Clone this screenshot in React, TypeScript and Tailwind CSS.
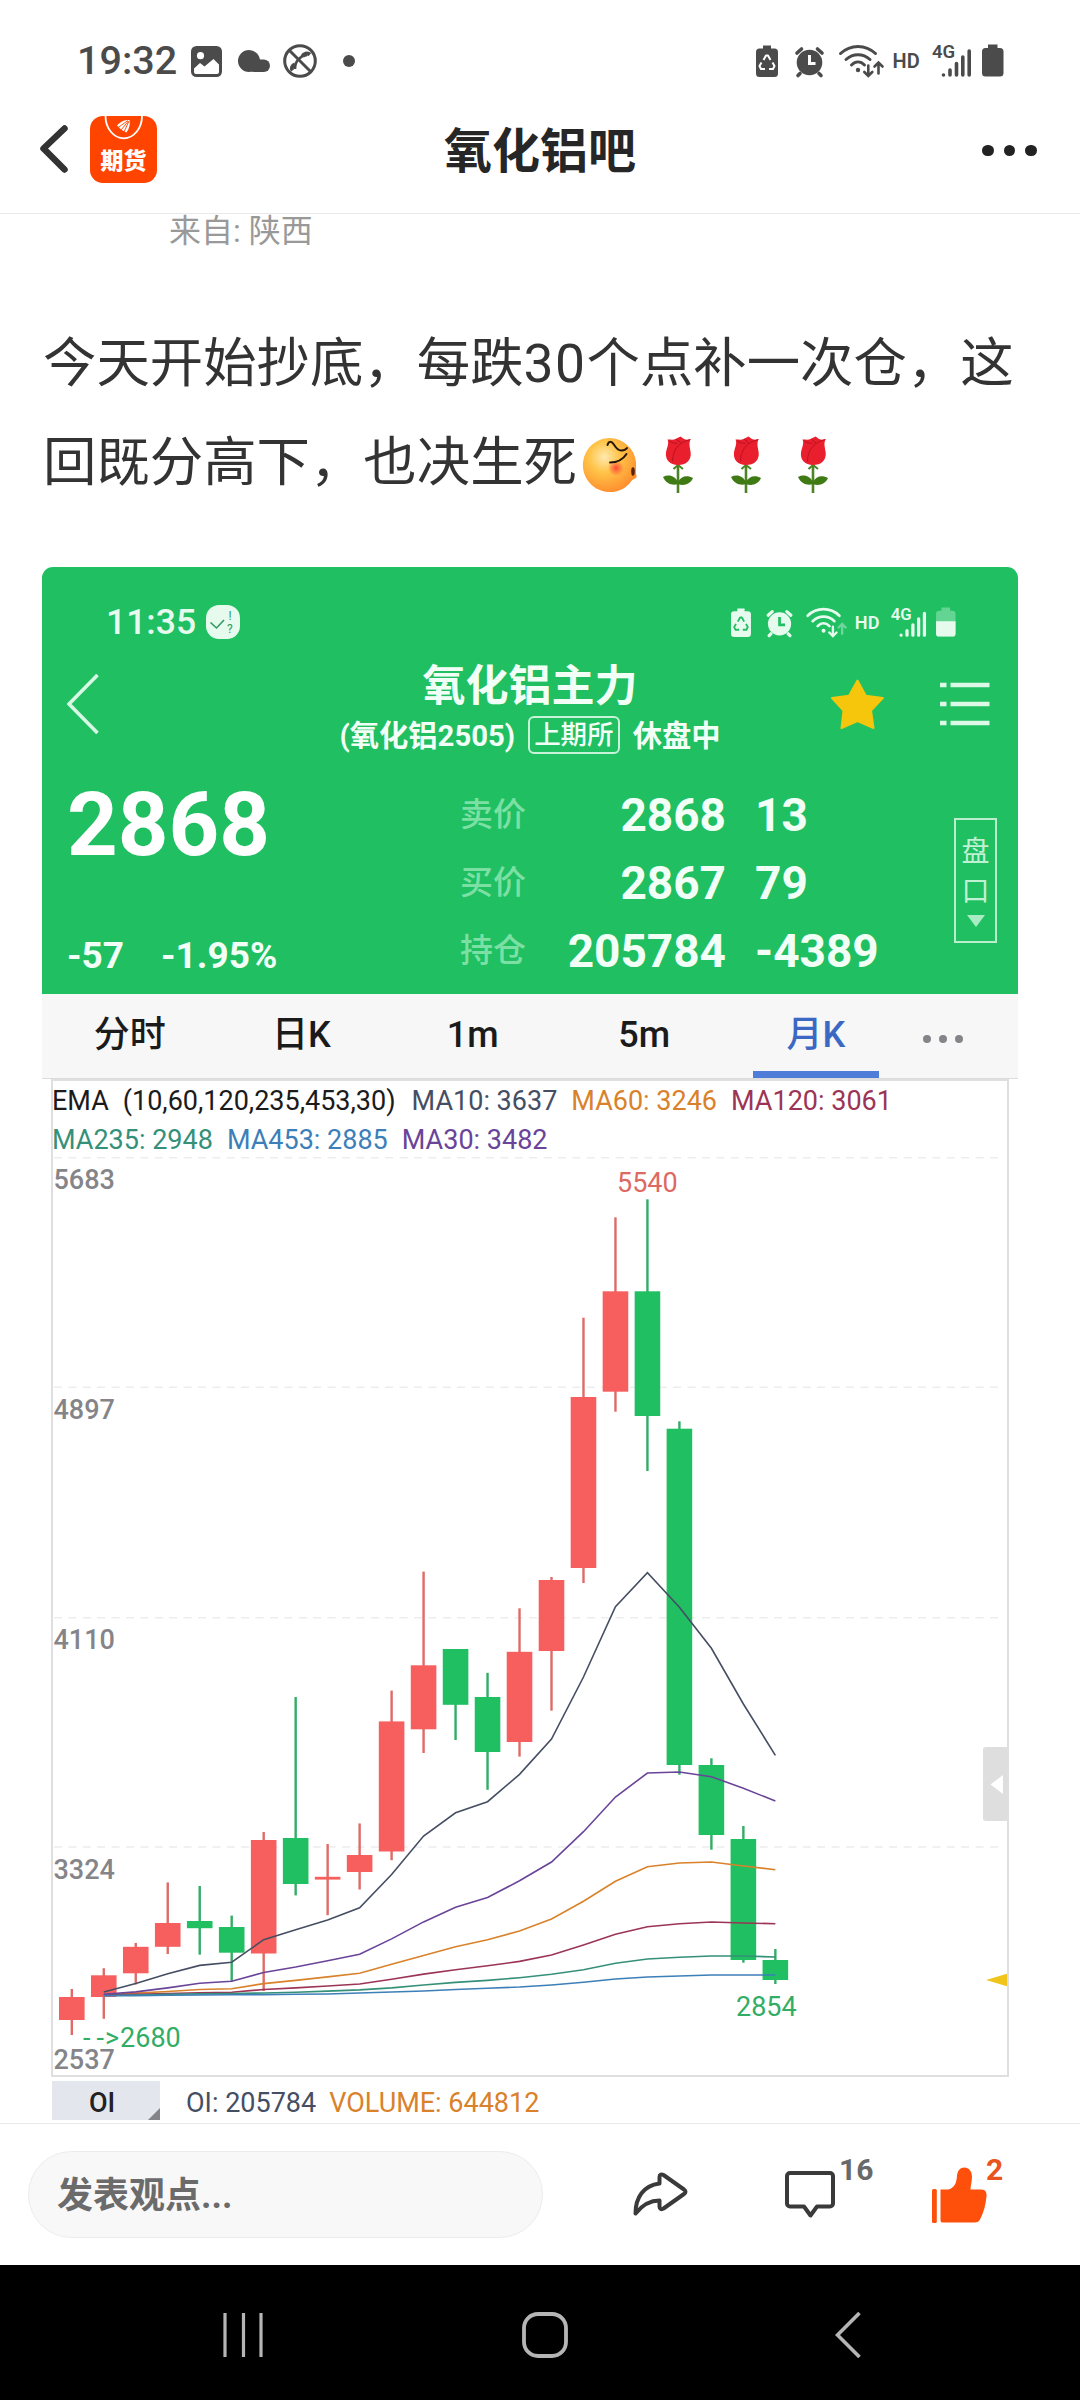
import type { ReactNode } from 'react';

const UP = '#f75f5f';
const DOWN = '#1fbf62';

const TABS = ['分时', '日K', '1m', '5m', '月K'];

const QUOTES = [
  { label: '卖价', value: '2868', extra: '13' },
  { label: '买价', value: '2867', extra: '79' },
  { label: '持仓', value: '205784', extra: '-4389' },
];

// [up, high, body top, body bottom, low]
const CANDLES: [boolean, number, number, number, number][] = [
  [true, 1989, 1997, 2020, 2035],
  [true, 1968.2, 1975.3, 1997, 2018.8],
  [true, 1942.9, 1946.8, 1973.3, 1984.4],
  [true, 1882.4, 1923, 1946.8, 1954],
  [false, 1886, 1921, 1928.2, 1954.7],
  [false, 1915.6, 1927, 1952.7, 1981.2],
  [true, 1832, 1840, 1953.5, 1991],
  [false, 1697, 1838, 1884, 1895.4],
  [true, 1844, 1876.8, 1879.6, 1915.2],
  [true, 1823.4, 1855, 1872, 1889.5],
  [true, 1690.6, 1721.4, 1851.5, 1860.2],
  [true, 1571.6, 1665.3, 1729.3, 1753],
  [false, 1649, 1649, 1704.8, 1740],
  [false, 1672.8, 1697, 1752, 1789.8],
  [true, 1608.3, 1651.8, 1742, 1756.6],
  [true, 1577, 1580, 1651, 1710.7],
  [true, 1317.7, 1397, 1568, 1583],
  [true, 1217.3, 1291.3, 1391.7, 1411.7],
  [false, 1199.3, 1291.3, 1416, 1471],
  [false, 1421.3, 1428.7, 1765, 1774.7],
  [false, 1758.3, 1765, 1835, 1849.7],
  [false, 1826, 1839, 1960, 1962.7],
  [false, 1949, 1960, 1980, 1984],
];

// Every average starts at the second candle
const AVERAGES = [
  {
    color: '#454e63',
    ys: [1991.9, 1983.6, 1973.7, 1965.4, 1962.2, 1939.7, 1929.8, 1919.9, 1907.7, 1874.5, 1836.1, 1812.8, 1801.7, 1774.4, 1739, 1677, 1606.7, 1572.7, 1607.3, 1648.3, 1704, 1755.3],
  },
  {
    color: '#d9822b',
    ys: [1994.7, 1993.1, 1991.5, 1989.5, 1988.7, 1983.6, 1980.4, 1976.9, 1973.3, 1964.2, 1955.5, 1946.8, 1939.7, 1931, 1919, 1901.3, 1881.3, 1866.7, 1863, 1862, 1866, 1869.7],
  },
  {
    color: '#9c3456',
    ys: [1995, 1994.3, 1993.5, 1992.7, 1992.3, 1989.5, 1987.9, 1986, 1984, 1979.2, 1974.1, 1969.8, 1965.8, 1961.4, 1955, 1945, 1934.3, 1926.7, 1923.7, 1922, 1923, 1923.7],
  },
  {
    color: '#35907a',
    ys: [1995.5, 1995, 1994.3, 1993.9, 1993.5, 1993, 1992.3, 1991.1, 1989.9, 1987.9, 1985, 1982.4, 1980.4, 1977.7, 1974.3, 1969.7, 1963.3, 1959, 1957.3, 1956, 1956, 1957],
  },
  {
    color: '#3d7fb8',
    ys: [1995.8, 1995.6, 1995.2, 1995, 1994.8, 1994.6, 1994.3, 1994, 1993, 1992, 1991, 1989.5, 1988.2, 1987, 1985, 1982.3, 1979, 1977, 1976, 1975, 1975, 1975],
  },
  {
    color: '#6a4499',
    ys: [1994.3, 1991.9, 1987.9, 1983.2, 1981.2, 1972.5, 1967, 1960.7, 1954.3, 1938.9, 1921.9, 1907.3, 1897.4, 1880.8, 1862, 1831.7, 1797, 1773, 1772, 1776.7, 1788.3, 1801],
  },
];

const GRID = [
  { y: 1157.7, label: '5683' },
  { y: 1387.3, label: '4897' },
  { y: 1617.7, label: '4110' },
  { y: 1847, label: '3324' },
];

const candleX = (i: number) => 71.8 + i * 31.98;

function StatusIcons({ className, cutout, dim }: { className: string; cutout: string; dim?: boolean }) {
  return (
    <svg viewBox="0 0 248 34" className={className} fill="currentColor" overflow="visible">
      {/* battery care */}
      <path d="M7 1.5h8v3h3.5a3.5 3.5 0 0 1 3.5 3.5v21.500a3.500 3.500 0 0 1-3.500 3.500h-15a3.500 3.500 0 0 1-3.500-3.500v-21.500a3.500 3.500 0 0 1 3.500-3.500h3.500z" />
      <g fill="none" stroke={cutout} strokeWidth="2" strokeLinejoin="round">
        <path d="M7.500 16l2.500-4.500h2l2.500 4.500M16.500 18.500l2 3.500-1.500 3h-4M9 25h-4l-1.500-3 2-3.500" />
      </g>
      {/* alarm */}
      <circle cx="53.500" cy="18.500" r="12.800" />
      <g stroke="currentColor" strokeWidth="3.600" strokeLinecap="round" fill="none">
        <path d="M41 9l4.500-4M66 9l-4.500-4M44 29.500l-2 2M63 29.500l2 2" />
      </g>
      <path d="M53.500 11v8.500h6" fill="none" stroke={cutout} strokeWidth="3" />
      {/* wifi */}
      <g fill="none" stroke="currentColor" strokeWidth="3" strokeLinecap="round">
        <path d="M84.500 9.500c10-9.500 25-9.500 35 0M90 15.500c7-6.500 17-6.500 24 0M95.500 21c4-4 9-4 13 0" />
      </g>
      <circle cx="102" cy="26" r="2.200" />
      <path d="M112.300 21.500v9.500M108.300 28l4 4 4-4" fill="none" stroke="currentColor" strokeWidth="2.600" strokeLinecap="round" />
      <path d="M122.500 29.500v-10M118.500 22.500l4-4 4 4" fill="none" stroke="currentColor" strokeWidth="2.600" strokeLinecap="round" opacity={dim ? 0.4 : 1} />
      <text x="136.500" y="24" fontSize="20" fontWeight="600">HD</text>
      <text x="176" y="14" fontSize="18.500" fontWeight="600">4G</text>
      {/* signal */}
      <g stroke="currentColor" strokeWidth="3.600" strokeLinecap="round">
        <path d="M187.500 31v0M194 26v5M200.500 19.500v11.500M206.800 13v18M213.200 7v24" />
      </g>
      {/* battery */}
      <g opacity={dim ? 0.35 : 1}>
        <path d="M232 .5h9.500v3.500h2.500a3.500 3.500 0 0 1 3.500 3.500v21.500a3.500 3.500 0 0 1-3.500 3.500h-14.500a3.500 3.500 0 0 1-3.500-3.500v-21.500a3.500 3.500 0 0 1 3.500-3.500h2.500z" />
      </g>
      {dim && <path d="M226 15.500h21.500v13.500a3.500 3.500 0 0 1-3.500 3.500h-14.500a3.500 3.500 0 0 1-3.500-3.500z" />}
    </svg>
  );
}

function StatusBar() {
  return (
    <div className="flex h-[88px] items-center pt-[34px] pl-[77px] text-[#4b4b4b]">
      <span className="w-[114px] text-[39.500px] leading-none font-medium">19:32</span>
      <svg viewBox="0 0 31 31" className="h-[31px] w-[31px]">
        <rect width="31" height="31" rx="5.500" fill="currentColor" />
        <circle cx="9.500" cy="9.700" r="3.600" fill="#fff" />
        <path d="M3 22.500l6-5.500 4.500 3.500 9-7.500 5.500 5.500v7.500a2 2 0 0 1-2 2h-21a2 2 0 0 1-2-2z" fill="#fff" />
      </svg>
      <svg viewBox="0 0 32 22" className="ml-4 h-[22px] w-8" fill="currentColor">
        <circle cx="11" cy="11" r="11" />
        <rect x="10" y="9.500" width="22" height="12.500" rx="6.200" />
      </svg>
      <svg viewBox="0 0 34 34" className="ml-[13px] h-[34px] w-[34px]" fill="none" stroke="currentColor">
        <circle cx="17" cy="17" r="15.300" strokeWidth="3" />
        <path d="M6 6l22 22" strokeWidth="3" />
        <path d="M12 25c0-8 5-13 12-14" strokeWidth="2.500" />
        <path d="M19.500 12.500c1-3 5-4 7.500-2M9.500 26.500c-1.500-2-.5-5 2.500-6" strokeWidth="4" />
      </svg>
      <span className="ml-[26px] size-3 rounded-full bg-[#4b4b4b]" />
      <StatusIcons className="ml-[401px] h-[34px] w-[248px]" cutout="#fff" />
    </div>
  );
}

function ForumIcon() {
  return (
    <svg viewBox="0 0 67 67" className="mb-[2px] ml-[22px] size-[67px]">
      <rect width="67" height="67" rx="13" fill="#ff4400" />
      <path d="M15.500 0a18 22 0 0 0 36.500 0" fill="none" stroke="#fff" strokeWidth="1.800" />
      <path d="M27 9.500c3-4 8-6 12.500-5.500 1 4-.5 9-3 12.500l-3-1.500-2.500-1.500-2-2z" fill="#fff" />
      <path d="M28 11.500l10-7M31 14l7.500-9M34 16l5-11" stroke="#ff4400" strokeWidth=".9" />
      <text x="33.500" y="53" textAnchor="middle" fontSize="23" fontWeight="900" fill="#fff">期货</text>
    </svg>
  );
}

function TitleBar() {
  return (
    <header className="flex h-[126px] items-center border-b border-[#e9e9e9] pl-10">
      <svg viewBox="0 0 28 48" className="mb-1 h-12 w-7" fill="none" stroke="#333" strokeWidth="6.500" strokeLinecap="round" strokeLinejoin="round">
        <path d="M24.500 3.500L3.500 23.500l21 21" />
      </svg>
      <ForumIcon />
      <h1 className="mt-[3px] ml-[287px] w-[196px] text-[48px] leading-none font-bold text-[#262626]">氧化铝吧</h1>
      <div className="ml-[342px] flex gap-[10px]">
        <span className="size-[11.500px] rounded-full bg-[#222]" />
        <span className="size-[11.500px] rounded-full bg-[#222]" />
        <span className="size-[11.500px] rounded-full bg-[#222]" />
      </div>
    </header>
  );
}

function KissFace() {
  return (
    <svg viewBox="0 0 56 56" className="size-14">
      <defs>
        <radialGradient id="skin" cx=".4" cy=".35" r=".7">
          <stop offset="0" stopColor="#ffe9b0" />
          <stop offset=".4" stopColor="#ffc54a" />
          <stop offset="1" stopColor="#ff8a2b" />
        </radialGradient>
        <radialGradient id="blush">
          <stop offset="0" stopColor="#ff4a35" />
          <stop offset="1" stopColor="#ff4a35" stopOpacity="0" />
        </radialGradient>
      </defs>
      <path d="M28 1a27 27 0 1 0 20 45c1-2 2-3 4-4 3-1 3-3 2-5v-12a27 27 0 0 0-26-24z" fill="url(#skin)" />
      <circle cx="34" cy="31" r="8" fill="url(#blush)" />
      <g fill="none" stroke="#26160a" strokeWidth="2" strokeLinecap="round">
        <path d="M25.500 8c1-4 4-4 6-1s4 7 8 6.500c2 0 4-.5 5.500-2.500" />
        <path d="M28 25.500c7 0 13-3 16.500-8.500" />
      </g>
      <ellipse cx="51" cy="34.500" rx="1.800" ry="4.200" fill="#5a2208" />
    </svg>
  );
}

function Rose() {
  return (
    <svg viewBox="0 0 56 58" className="h-[58px] w-14">
      <path d="M28 27v30" stroke="#4c8426" strokeWidth="2.600" />
      <path d="M28 48c-5 2-12 0-15-7 6-3 12-1 15 5 3-6 9-7 15-4-3 7-10 8-15 6z" fill="#3f7a14" />
      <path d="M23.500 33l4.500-4 5 4" fill="none" stroke="#4c8426" strokeWidth="2" />
      <path d="M17.500 3.500c4 0 6 .5 8-.5l5-2.500 3.500 2.500c2 1 4 .5 6.500.5-2 4-.5 8 .2 13 .8 8-4.700 12.500-12.700 12.500s-13-5-12-12.500c.7-5 3.500-9 1.500-13z" fill="#ea1f2d" />
      <path d="M40.500 3.500c-9 2-18 8-18 22M19 5c3 2 5 2 8.500 2.500M26 3l5 4" fill="none" stroke="#bb1222" strokeWidth="1" />
    </svg>
  );
}

function QuoteHeader() {
  return (
    <div className="h-[427px] bg-[#1fbf62] pt-[33px] text-[#f2fff7]">
      <div className="flex h-11 items-center pl-[64px] text-[#e6fbee]">
        <span className="w-[100px] pt-px text-[35.500px] leading-none font-medium">11:35</span>
        <svg viewBox="0 0 34 34" className="size-[34px]">
          <rect width="34" height="34" rx="13" fill="currentColor" />
          <path d="M4.500 17.500l6 5.500 7.500-8" fill="none" stroke="#2f9a60" strokeWidth="1.600" />
          <text x="22.500" y="15" fontSize="12" fill="#2f9a60">!</text>
          <text x="21" y="28" fontSize="12" fill="#2f9a60">?</text>
        </svg>
        <StatusIcons className="ml-[491px] h-[31px] w-[225px]" cutout="#1fbf62" dim />
      </div>

      <div className="flex h-[119px]">
        <div className="flex w-[187px] items-center pl-[25px]">
          <svg viewBox="0 0 32 60" className="h-[60px] w-8" fill="none" stroke="#d8f7e4" strokeWidth="3.600">
            <path d="M30.500 1L2 30l28.500 29" />
          </svg>
        </div>
        <div className="flex flex-1 flex-col items-center pt-4">
          <div className="h-[56px] text-[43px] leading-[52px] font-bold">氧化铝主力</div>
          <div className="flex h-[38px] items-center text-[29.300px] leading-[38px] font-bold">
            <span className="pt-px">(氧化铝2505)</span>
            <span className="ml-[13px] flex h-[38px] items-center rounded-md border-2 border-[#c9f3d9] px-1 text-[26.500px] leading-none font-medium">
              上期所
            </span>
            <span className="ml-[13px] pt-px">休盘中</span>
          </div>
        </div>
        <div className="flex w-[187px] items-center">
          <svg viewBox="0 0 53 50" className="h-[50px] w-[53px]" fill="#f5c60c" stroke="#f5c60c" strokeWidth="2" strokeLinejoin="round">
            <path d="M26.500 1.500l8.300 15.200 17 2.300-11.800 12.500 2.500 17.500-16-7-16 7 2-17.500-11.500-12.500 17-2.300z" />
          </svg>
          <svg viewBox="0 0 50 44" className="ml-[56px] h-11 w-[50px]" stroke="#dbf9e6" strokeWidth="4.500">
            <path d="M0 3h6.500M10.500 3h39M0 22h6.500M10.500 22h39M0 41h6.500M10.500 41h39" />
          </svg>
        </div>
      </div>

      <div className="flex pt-[17px]">
        <div className="w-[418px] pt-px pl-[25px]">
          <div className="text-[88.500px] leading-[88px] font-bold text-white">2868</div>
          <div className="mt-[65px] flex text-[37px] leading-[44px] font-bold">
            <span className="w-[94px]">-57</span>
            <span>-1.95%</span>
          </div>
        </div>
        <div>
          {QUOTES.map((q) => (
            <div key={q.label} className="flex h-[68px] items-center leading-none">
              <span className="w-[68px] text-[33px] font-medium text-[#7ce0a4]">{q.label}</span>
              <span className="w-[198px] pt-px text-right text-[46px] font-bold">{q.value}</span>
              <span className="ml-[29px] pt-px text-[46px] font-bold">{q.extra}</span>
            </div>
          ))}
        </div>
        <div className="mt-[38px] mr-[21px] ml-auto flex h-[125px] w-[43px] flex-col items-center border-2 border-[#b9efcd] pt-[12px] text-[28px] leading-10 text-[#c0f1d2]">
          <span>盘</span>
          <span>口</span>
          <svg viewBox="0 0 18 12" className="mt-[3px] h-3 w-[18px] shrink-0" fill="#a9ebc2">
            <path d="M0 0h18l-9 12z" />
          </svg>
        </div>
      </div>
    </div>
  );
}

function Tabs() {
  return (
    <div className="flex h-[85px] border-b border-[#dcdcdc] bg-[#f7f7f8] pl-[2px]">
      {TABS.map((tab) => {
        const active = tab === '月K';
        return (
          <div
            key={tab}
            className={`flex w-[171.500px] flex-col items-center text-[36px] leading-[82px] font-medium ${
              active ? 'text-[#3b68c2]' : 'text-[#1b1b1b]'
            }`}
          >
            <span className="h-[77px]">{tab}</span>
            {active && <span className="h-[7px] w-[126px] bg-[#4f7bd9]" />}
          </div>
        );
      })}
      <div className="mt-[41px] ml-[21px] flex gap-2">
        <span className="size-2 rounded-full bg-[#858589]" />
        <span className="size-2 rounded-full bg-[#858589]" />
        <span className="size-2 rounded-full bg-[#858589]" />
      </div>
    </div>
  );
}

function CandleChart() {
  return (
    <svg viewBox="53 1157 954 918" className="block h-[918px] w-[954px]" fontSize="27">
      {GRID.map((g) => (
        <g key={g.label}>
          <path d={`M54 ${g.y}h950`} stroke="#ededef" strokeWidth="1.500" strokeDasharray="8 6.400" />
          <text x="53.500" y={g.y + 31.5} fill="#858589" fontWeight="500">{g.label}</text>
        </g>
      ))}
      <text x="53.500" y="2069" fill="#858589" fontWeight="500">2537</text>

      {CANDLES.map(([up, high, top, bottom, low], i) => (
        <g key={i} fill={up ? UP : DOWN}>
          <rect x={candleX(i) - 1.2} y={high} width="2.400" height={low - high} fill={up ? '#df6b68' : '#33ad66'} />
          <rect x={candleX(i) - 12.8} y={top} width="25.600" height={bottom - top} />
        </g>
      ))}

      {AVERAGES.map((avg) => (
        <polyline
          key={avg.color}
          points={avg.ys.map((y, i) => `${candleX(i + 1)},${y}`).join(' ')}
          fill="none"
          stroke={avg.color}
          strokeWidth="1.600"
        />
      ))}

      <text x="617" y="1192" fill="#dd6963">5540</text>
      <text x="736" y="2016" fill="#33ad66">2854</text>
      <text x="83" y="2047" dx="0 6 1 1" fill="#33ad66">{'-->2680'}</text>

      {/* side panel handle and last price marker */}
      <rect x="983" y="1747" width="28" height="74" rx="3" fill="#dedede" />
      <path d="M990.500 1784.500l12.500-9.500v19z" fill="#fff" />
      <path d="M986 1980l22-6.500v13z" fill="#f0c419" />
    </svg>
  );
}

function Legend() {
  return (
    <div className="h-[76px] pt-px text-[27px] leading-[38.500px] whitespace-pre">
      <div className="-ml-px flex gap-[14px]">
        <span className="text-[#1b1b1b]">
          EMA<span className="ml-[14px] mr-[2px]">(10,60,120,235,453,30)</span>
        </span>
        <span className="text-[#454e63]">MA10: 3637</span>
        <span className="text-[#d9822b]">MA60: 3246</span>
        <span className="text-[#9c3456]">MA120: 3061</span>
      </div>
      <div className="-ml-px flex gap-[14px]">
        <span className="text-[#35907a]">MA235: 2948</span>
        <span className="text-[#3d7fb8]">MA453: 2885</span>
        <span className="text-[#6a4499]">MA30: 3482</span>
      </div>
    </div>
  );
}

function PostBody() {
  return (
    <main className="h-[1909px] px-[42px]">
      <div className="pt-px pl-[127px] text-[32px] leading-8 text-[#999]">来自: 陕西</div>
      <div className="mt-[67px] pl-px text-[53.400px] leading-[99px] whitespace-nowrap text-[#333]">
        <p>
          今天开始抄底，每跌<span className="tracking-[1.500px]">30</span>个点补一次仓，这
        </p>
        <div className="flex h-[99px] items-center">
          <p>回既分高下，也决生死</p>
          <div className="mt-1 ml-[5px] flex items-center gap-[11.800px]">
            <KissFace />
            <Rose />
            <Rose />
            <Rose />
          </div>
        </div>
      </div>

      <div className="mt-[55px] w-[976px] overflow-hidden rounded-t-[11px]">
        <QuoteHeader />
        <Tabs />
        <div className="ml-[9px] h-[998px] w-[958px] border-2 border-[#dfdfe1]">
          <Legend />
          <CandleChart />
        </div>
        <div className="mt-1 ml-[10px] flex h-[39px] items-center text-[27px] leading-none">
          <div className="relative flex h-full w-[108px] items-center justify-center bg-[#e4e6ee] pt-1.5 pr-2 font-medium text-[#222]">
            OI
            <svg viewBox="0 0 12 12" className="absolute right-0 bottom-0 size-3" fill="#858589">
              <path d="M12 0v12h-12z" />
            </svg>
          </div>
          <span className="ml-[26px] pt-1.5 text-[#454e63]">OI: 205784</span>
          <span className="ml-[13px] pt-1.5 text-[#d9822b]">VOLUME: 644812</span>
        </div>
      </div>
    </main>
  );
}

function Action({ className, badge, children }: { className: string; badge?: ReactNode; children: ReactNode }) {
  return (
    <div className={`relative ${className}`}>
      {children}
      {badge}
    </div>
  );
}

function CommentBar() {
  return (
    <footer className="flex h-[142px] items-center border-t border-[#e9e9e9] bg-white pl-7">
      <div className="flex h-[87px] w-[515px] items-center rounded-full border border-[#ececec] bg-[#f8f8f8] pt-[3px] pl-7 text-[36px] leading-none font-bold text-[#6b6b6b]">
        发表观点...
      </div>
      <Action className="ml-[90px]">
        <svg viewBox="0 0 55 45" className="block h-[45px] w-[55px]" fill="none" stroke="#3a3a3a" strokeWidth="4" strokeLinejoin="round">
          <path d="M26.500 11.500v-6.500c0-2.500 2-3 4-2l20.500 14.500c2 1.500 2 3 0 4.500l-20.500 14.500c-2 1.500-4 .5-4-2v-6c-11 0-18 5.500-24 13 0-16 8-28 24-30z" />
        </svg>
      </Action>
      <Action
        className="ml-[97px]"
        badge={<span className="absolute -top-[19px] left-[54px] text-[30px] leading-9 font-bold text-[#696969]">16</span>}
      >
        <svg viewBox="0 0 50 48" className="block h-12 w-[50px]" fill="none" stroke="#3a3a3a" strokeWidth="4" strokeLinejoin="round">
          <path d="M5 2h40a3 3 0 0 1 3 3v27.500a3 3 0 0 1-3 3h-13l-6.500 9-6.500-9h-14a3 3 0 0 1-3-3v-27.500a3 3 0 0 1 3-3z" />
        </svg>
      </Action>
      <Action
        className="ml-[97px]"
        badge={<span className="absolute -top-[15px] left-[54px] text-[30px] leading-9 font-bold text-[#e9541c]">2</span>}
      >
        <svg viewBox="0 0 55 56" className="block h-14 w-[55px]" fill="#ff500b">
          <rect y="22" width="4.800" height="34" rx="1.500" />
          <path d="M8.500 22.500h8c6-2 8-6 8.500-14 .5-5 3-8 7.500-8s7.500 4 7.500 9-1.500 9-1.500 13h11c4 0 5.500 3 5 7-1 9-3 16-6 22-1.500 3-3 4-6 4h-32a2 2 0 0 1-2-2z" />
        </svg>
      </Action>
    </footer>
  );
}

function SystemNav() {
  return (
    <nav className="flex h-[135px] items-center bg-black pt-1">
      <svg viewBox="0 0 40 44" className="ml-[223px] h-11 w-10" stroke="#b5b5b5" strokeWidth="3.200">
        <path d="M2 0v44M20.500 0v44M38 0v44" />
      </svg>
      <svg viewBox="0 0 46 46" className="ml-[259px] size-[46px]" fill="none" stroke="#b5b5b5" strokeWidth="3.800">
        <rect x="2" y="2" width="42" height="42" rx="14" />
      </svg>
      <svg viewBox="0 0 26 46" className="ml-[267px] h-[46px] w-[26px]" fill="none" stroke="#b5b5b5" strokeWidth="3.600">
        <path d="M24.500 1L2.500 23l22 22" />
      </svg>
    </nav>
  );
}

export default function App() {
  return (
    <div className="h-[2400px] w-[1080px] overflow-hidden bg-white font-[Roboto,'Noto_Sans_CJK_SC',sans-serif]">
      <StatusBar />
      <TitleBar />
      <PostBody />
      <CommentBar />
      <SystemNav />
    </div>
  );
}
